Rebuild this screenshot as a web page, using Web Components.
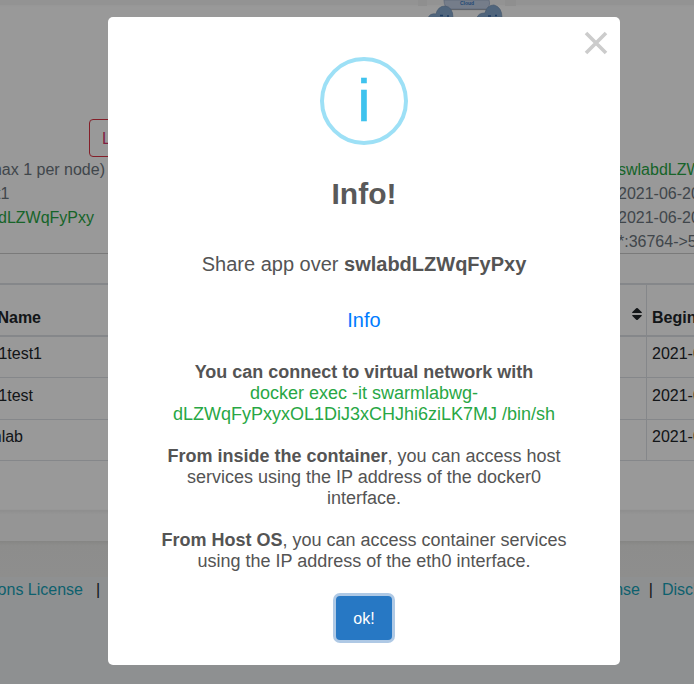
<!DOCTYPE html>
<html lang="en"><head><meta charset="utf-8"><title>Info</title>
<style>
html,body{margin:0;height:100%;overflow:hidden;background:#fff;font:16px/24px "Liberation Sans",Arial,sans-serif;color:#212529}
</style></head><body>
<app-page></app-page>
<info-dialog heading="Info!">
<span slot="lead">Share app over <b>swlabdLZWqFyPxy</b></span>
<span slot="link">Info</span>
<info-note><b>You can connect to virtual network with</b><br><span style="color:#28a745">docker exec -it swarmlabwg-<br>dLZWqFyPxyxOL1DiJ3xCHJhi6ziLK7MJ /bin/sh</span></info-note>
<info-note><b>From inside the container</b>, you can access host<br>services using the IP address of the docker0<br>interface.</info-note>
<info-note><b>From Host OS</b>, you can access container services<br>using the IP address of the eth0 interface.</info-note>
</info-dialog>
<script>
const define=(name,html)=>customElements.define(name,class extends HTMLElement{
  constructor(){
    super();
    this.attachShadow({mode:"open"}).innerHTML=html;
    for(const el of this.shadowRoot.querySelectorAll("[data-attr]"))el.textContent=this.getAttribute(el.dataset.attr)||"";
  }
});

/* One row of the page: text ending at the left gutter, text starting at the right one */
define("split-row",`<style>
:host{display:grid;grid-template-columns:var(--end,108px) 1fr 76px;box-sizing:border-box;white-space:nowrap}
.l{display:flex;justify-content:flex-end;grid-column:1}
.r{grid-column:3;overflow:hidden}
</style><div class="l"><slot name="left"></slot></div><div class="r"><slot></slot></div>`);

define("sort-icon",`<style>:host{display:block;width:10px;height:14px}svg{display:block}</style>
<svg width="10" height="14" viewBox="0 0 10 14"><path d="M.8 6Q-.3 6 .4 5L4.2 1.3Q5 .7 5.8 1.3L9.6 5Q10.3 6 9.2 6ZM.8 8H9.2Q10.3 8 9.6 9L5.8 12.7Q5 13.3 4.2 12.7L.4 9Q-.3 8 .8 8Z" fill="#212529"/></svg>`);

define("cloud-diagram",`<style>:host{display:block;width:100px;height:17px;overflow:hidden}svg{display:block}text{font:bold 5px "Liberation Sans",sans-serif}</style>
<svg width="100" height="17" viewBox="0 0 100 17">
<path d="M0 0H9V6H0ZM87 0H98V6H87Z" fill="#eee"/>
<path d="M32 9.6H70" stroke="#999" stroke-width="1"/>
<path d="M26 0Q26 8 32 9H68Q73 6 71 0Z" fill="#c3d0e6" stroke="#9fb0cc" stroke-width=".8"/>
<g fill="#86a9cf" stroke="#7493b8" stroke-width=".7"><path d="M10 18Q12 13 18 14Q20 6 27 6Q35 7 35 18Z"/><path d="M59 18Q60 13 67 13Q69 5 76 5Q84 7 84 18Z"/></g>
<path d="M22 15.5H25M29 16H31M70 16H73M77 15.5H79" stroke="#3466a5" stroke-width="1.4"/>
<text x="49" y="5.3" text-anchor="middle" fill="#397bc3">Cloud</text></svg>`);

define("page-table",`<style>
:host{display:block}
split-row{height:42px;border-bottom:1px solid #dee2e6;--end:42px;grid-template-columns:42px 1fr 48px;line-height:24px}
split-row.a{height:41px}
.head{display:grid;grid-template-columns:41px 1fr 14px 48px;height:54px;border-block:2px solid #dee2e6;box-sizing:border-box;font-weight:bold;white-space:nowrap}
.name{display:flex;justify-content:flex-end;padding-top:21px}
sort-icon{grid-column:3;margin-top:22px}
.cell{box-sizing:border-box;height:100%;border-left:1px solid #dee2e6;padding:5px 0 0 5px;overflow:hidden}
.head .cell{padding-top:21px}
.t{padding-top:5px}
</style>
<div class="head"><div class="name">Name</div><sort-icon></sort-icon><div class="cell">Begin</div></div>
<split-row class="a"><span class="t" slot="left">1test1</span><div class="cell">2021-06</div></split-row>
<split-row><span class="t" slot="left" style="margin-right:9px;padding-top:6px">1test</span><div class="cell" style="padding-top:6px">2021-06</div></split-row>
<split-row class="a"><span class="t" slot="left" style="margin-right:19px">swarmlab</span><div class="cell">2021-06</div></split-row>`);

define("page-footer",`<style>
:host{display:flex;box-sizing:border-box;height:107px;padding-top:1px;background:#edf0f2;white-space:nowrap;color:#17a2b8}
.l{width:83px;display:flex;justify-content:flex-end}
.bar{color:#212529}.first{padding-left:13px}
.r{margin-left:auto;display:flex;width:80px}
.nse{width:26px;display:flex;justify-content:flex-end}
.bar2{padding:0 9px 0 8.8px}
</style><div class="l">Creative Commons License</div><div class="bar first">|</div>
<div class="r"><span class="nse">License</span><span class="bar bar2">|</span><span>Disclaimer</span></div>`);

define("app-page",`<style>
:host{display:block;height:684px;overflow:hidden}
.top{height:17px;background:linear-gradient(#f5f5f5 5px,#fbfbfb 5px,#fff 7px);display:flex;padding-left:418px}
.action{height:140px;display:flex;align-items:flex-end;padding-left:89px}
.btn{box-sizing:border-box;width:100px;height:38px;border:1px solid #dc3545;border-radius:4px;color:#d6336c;padding:7px 12px}
.info{height:97px;box-sizing:border-box;padding-top:1px;border-bottom:1px solid #ccc;color:#6c757d}
.info split-row{height:24px}
.info split-row:last-child{height:23px}
.green{color:#28a745}
.gap{height:29px}
.fill{height:50px}
.band{height:30px;background:linear-gradient(#eee,#f8f8f8 3px);box-shadow:0 -1px 1px #eee}
.shade{height:36px;background:linear-gradient(#dfdfdc,#ececea 5px,#ededec)}
</style>
<div class="top"><cloud-diagram></cloud-diagram></div>
<div class="action"><div class="btn">Logs</div></div>
<div class="info">
<split-row style="--end:105px"><span slot="left">(max 1 per node)</span><span class="green">swlabdLZWqFyPxy</span></split-row>
<split-row style="--end:9.4px"><span slot="left">test1</span>2021-06-20</split-row>
<split-row style="--end:94px"><span slot="left" class="green">swlabdLZWqFyPxy</span>2021-06-20</split-row>
<split-row>*:36764-&gt;5000</split-row>
</div>
<div class="gap"></div><page-table></page-table><div class="fill"></div><div class="band"></div><div class="shade"></div><page-footer></page-footer>`);

define("info-note",`<style>:host{display:block;font-size:18px;line-height:21px;margin-bottom:21px;white-space:nowrap}</style><slot></slot>`);

define("info-dialog",`<style>
:host{position:absolute;inset:0;background:rgba(0,0,0,.4);display:flex;align-items:flex-start;padding:17px 0 0 108px;color:#545454}
.box{position:relative;box-sizing:border-box;width:512px;height:648px;background:#fff;border-radius:5px;display:flex;flex-direction:column;align-items:center;padding-top:40px;text-align:center}
.close{position:absolute;right:12px;top:13.5px}
.icon{box-sizing:border-box;width:88px;height:88px;border:4px solid #9de0f6;border-radius:50%;color:#3fc3ee;font-size:60px;line-height:80px;-webkit-text-stroke:.5px #3fc3ee;flex:none}
h2{margin:29px 0 0;font-size:30px;line-height:40px;color:#595959}
.lead,.link{font-size:20px;line-height:24px}
.lead{margin-top:38px}
.link{margin:32px 0 30px;color:#007bff}
button{margin-top:3px;box-sizing:border-box;width:56px;height:44px;border:0;border-radius:4px;background:#2778c4;color:#fff;font:16px "Liberation Sans",sans-serif;padding:2px 0 0;box-shadow:0 0 0 3px #afc9e5}
</style><div class="box">
<svg class="close" width="24" height="24" viewBox="0 0 24 24"><path d="M2 2L22 22M22 2L2 22" stroke="#ccc" stroke-width="3.6"/></svg>
<div class="icon">i</div><h2 data-attr="heading"></h2>
<div class="lead"><slot name="lead"></slot></div><div class="link"><slot name="link"></slot></div>
<slot></slot><button>ok!</button></div>`);
</script>
</body></html>
